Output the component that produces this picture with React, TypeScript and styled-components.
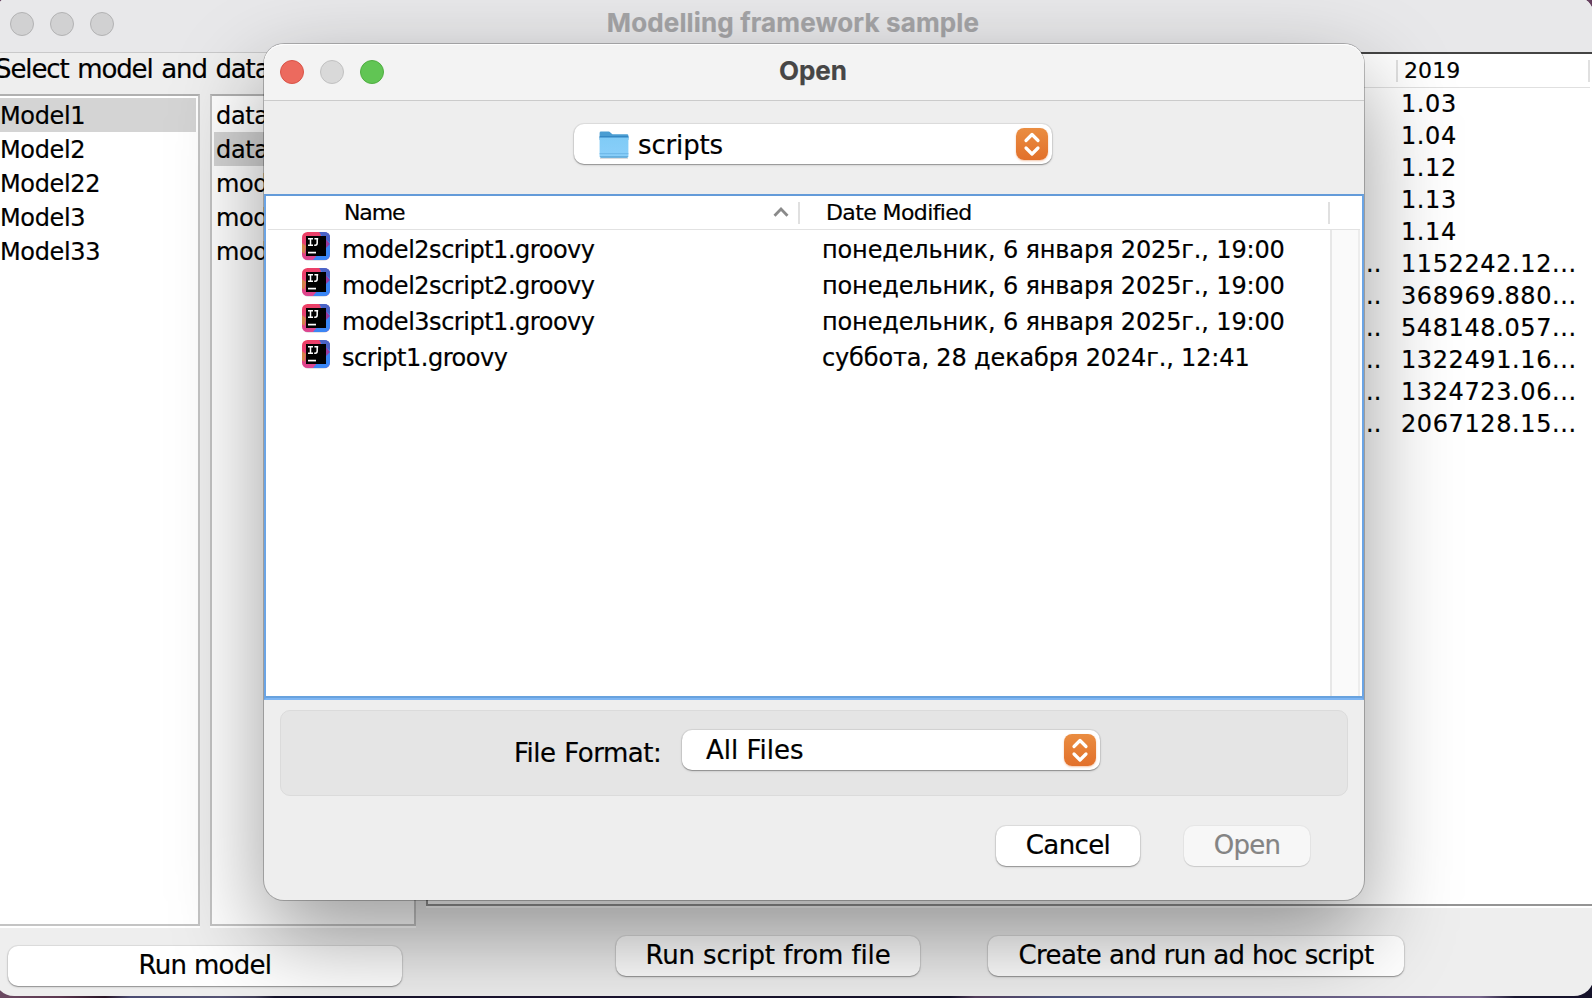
import React from 'react';
import styled, { createGlobalStyle, css } from 'styled-components';

const GlobalStyle = createGlobalStyle`
  html, body { margin: 0; padding: 0; }
  * { box-sizing: border-box; }
  body {
    width: 1592px;
    height: 998px;
    overflow: hidden;
    font-family: 'DejaVu Sans', 'Noto Sans', sans-serif;
    -webkit-text-stroke: 0.2px currentColor;
    color: #000;
  }
`;

const Desktop = styled.div`
  position: relative;
  width: 1592px;
  height: 998px;
  overflow: hidden;
  background:
    linear-gradient(90deg, #6b4a62 0, #5d3850 60px, #2a1526 105px, #4b4c72 130px, #565475 220px, #44405a 255px,
      #15122a 275px, #1b1430 560px, #15122a 950px, #55405e 975px, #4f5680 1060px, #5a5c84 1120px, #75648a 1480px,
      #1a1730 1515px, #15122a 1592px) bottom / 100% 14px no-repeat,
    #66405f;
`;

const Window = styled.section`
  display: flex;
  flex-direction: column;
  width: 1600px;
  height: 1000px;
  margin: -4px 0 0 -6px;
  border-radius: 20px;
  background: #eeeeee;
  overflow: hidden;
`;

const TitleBar = styled.header<{ $active?: boolean }>`
  display: grid;
  grid-template-columns: 200px 1fr 204px;
  align-items: center;
  flex: none;
  height: 56px;
  padding-left: 16px;
  background: ${p => (p.$active ? '#f3f3f3' : '#e8e8ea')};
  color: ${p => (p.$active ? '#464646' : '#a5a5a7')};
`;

const TitleText = styled.h1<{ $spacing: number }>`
  margin: 0;
  padding: 0 14px 2px 0;
  text-align: center;
  font: 700 26px/32px Inter, sans-serif;
  letter-spacing: ${p => p.$spacing}px;
  white-space: nowrap;
`;

const Lights = styled.div`
  display: flex;
  gap: 16px;
`;

const Light = styled.span<{ $fill: string; $edge: string }>`
  width: 24px;
  height: 24px;
  border-radius: 50%;
  background: ${p => p.$fill};
  border: 1px solid ${p => p.$edge};
`;

const Workspace = styled.div`
  display: flex;
  gap: 10px;
  flex: 1;
`;

const Sidebar = styled.aside`
  display: flex;
  flex-direction: column;
  width: 422px;
  border-top: 1px solid #c9c9ca;
`;

const SidebarLabel = styled.p`
  margin: 0;
  padding-left: 1px;
  height: 41px;
  font-size: 26px;
  line-height: 33px;
  letter-spacing: -1.1px;
  word-spacing: 1.4px;
  white-space: nowrap;
`;

const Lists = styled.div`
  display: flex;
  gap: 10px;
`;

const ListBox = styled.ul<{ $width: number; $inset: number }>`
  width: ${p => p.$width}px;
  height: 832px;
  margin: 0;
  padding: 2px 2px 0 ${p => p.$inset}px;
  list-style: none;
  background: #fff;
  border: 2px solid #c4c4c4;
  border-top-color: #b0b0b0;
  box-shadow: 0 2px 0 #fff;
`;

const ListItem = styled.li<{ $selected?: boolean }>`
  height: 34px;
  padding-left: 2px;
  font-size: 24px;
  line-height: 37px;
  letter-spacing: -0.35px;
  white-space: nowrap;
  background: ${p => (p.$selected ? '#d4d4d4' : 'transparent')};
`;

const SidebarFooter = styled.div`
  display: flex;
  padding: 20px 14px 0;
`;

const Content = styled.main`
  display: flex;
  flex-direction: column;
  flex: 1;
`;

const DataTable = styled.div`
  display: flex;
  flex-direction: column;
  height: 854px;
  background: #fff;
  border: 2px solid #949494;
  border-top-color: #444;
  border-right: 0;
  box-shadow: 0 2px 0 #fff;
`;

const DataHeader = styled.div`
  display: flex;
  justify-content: flex-end;
  flex: none;
  height: 34px;
  margin-right: 4px;
  padding-top: 6px;
  border-bottom: 1px solid #e0e0e0;
`;

const DataHeaderCell = styled.div`
  width: 194px;
  height: 22px;
  padding-left: 6px;
  border-left: 2px solid #e0e0e0;
  border-right: 2px solid #e0e0e0;
  font-size: 22px;
  line-height: 21px;
  letter-spacing: 0.1px;
`;

const DataRow = styled.div`
  display: grid;
  grid-template-columns: 35px 193px;
  justify-content: end;
  height: 32px;
  font-size: 24px;
  line-height: 32px;
  letter-spacing: 0.6px;
  white-space: nowrap;
`;

const Clipped = styled.span`
  padding-left: 0;
  letter-spacing: 0;
`;

const ScriptBar = styled.div`
  display: flex;
  justify-content: center;
  gap: 68px;
  padding-top: 30px;
`;

const raised = css`
  border-radius: 10px;
  background: #fff;
  box-shadow: 0 0 0 1px rgba(0, 0, 0, 0.06), 0 1px 1px rgba(0, 0, 0, 0.26), 0 1px 3px rgba(0, 0, 0, 0.14);
`;

const PushButton = styled.button<{ $width: number; $spacing?: number }>`
  ${raised}
  width: ${p => p.$width}px;
  height: 40px;
  margin: 0;
  padding: 0 0 2px;
  border: 0;
  font-family: inherit;
  font-size: 26px;
  line-height: 38px;
  letter-spacing: ${p => p.$spacing ?? 0}px;
  color: #000;
  white-space: nowrap;
  &:disabled {
    color: #848484;
    background: #f7f7f7;
    box-shadow: 0 0 0 1px rgba(0, 0, 0, 0.03), 0 1px 1px rgba(0, 0, 0, 0.12);
  }
`;

const Dialog = styled.section`
  position: absolute;
  left: 264px;
  top: 44px;
  display: flex;
  flex-direction: column;
  width: 1100px;
  height: 856px;
  border-radius: 20px;
  background: #eeeeee;
  box-shadow: 0 0 0 1px rgba(0, 0, 0, 0.24), 0 36px 92px rgba(0, 0, 0, 0.4);
`;

const DialogTitle = styled(TitleBar)`
  border-radius: 20px 20px 0 0;
  box-shadow: inset 0 1px 0 #fdfdfd;
`;

const PathBar = styled.div`
  display: flex;
  justify-content: center;
  flex: none;
  height: 94px;
  padding: 23px 2px 0 0;
  border-top: 1px solid #cbcbcb;
`;

const Popup = styled.div<{ $width: number; $pad: number; $spacing: number }>`
  ${raised}
  display: flex;
  align-items: center;
  width: ${p => p.$width}px;
  height: 40px;
  padding: 0 4px 0 ${p => p.$pad}px;
  font-size: 26px;
  letter-spacing: ${p => p.$spacing}px;
`;

const PopupText = styled.span<{ $line: number }>`
  flex: 1;
  height: 40px;
  line-height: ${p => p.$line}px;
`;

const Stepper = styled.span`
  display: grid;
  place-items: center;
  width: 32px;
  height: 32px;
  border-radius: 8px;
  background: linear-gradient(#ea8d41, #e2702a);
  box-shadow: 0 1px 2px rgba(226, 112, 42, 0.4);
`;

const FolderGlyph = styled.svg`
  width: 30px;
  height: 28px;
  margin: 1px 9px 0 0;
`;

const FilePane = styled.div`
  flex: none;
  height: 506px;
  background: #fff;
  border: 2px solid #6ba4e4;
  border-top-color: #639bd9;
  border-bottom: 2px solid #7db5f3;
  box-shadow: inset 0 -2px 0 #68a2de;
`;

const FileHeader = styled.div`
  display: grid;
  grid-template-columns: 532px 530px 28px;
  height: 34px;
  margin: 0 2px;
  padding-top: 6px;
  border-bottom: 1px solid #e2e2e2;
`;

const HeaderCell = styled.div<{ $pad: number; $spacing: number }>`
  display: flex;
  justify-content: space-between;
  height: 22px;
  padding: 0 9px 0 ${p => p.$pad}px;
  border-right: 2px solid #e0e0e0;
  font-size: 22px;
  line-height: 22px;
  letter-spacing: ${p => p.$spacing}px;
  white-space: nowrap;
`;

const SortCaret = styled.svg`
  width: 16px;
  height: 10px;
  margin-top: 5px;
`;

const FileBody = styled.div`
  display: grid;
  grid-template-columns: 1fr 30px;
  height: 466px;
  margin: 0 2px;
`;

const ScrollTrack = styled.div`
  background: #fafafa;
  border-left: 2px solid #e7e7e7;
  border-right: 2px solid #ededed;
`;

const FileRow = styled.div`
  display: grid;
  grid-template-columns: 40px 480px 1fr;
  height: 36px;
  padding: 1px 0 0 34px;
  font-size: 24px;
  line-height: 39px;
  white-space: nowrap;
`;

const AppGlyph = styled.svg`
  width: 28px;
  height: 30px;
`;

const FileName = styled.span`
  letter-spacing: -0.48px;
`;

const FileDate = styled.span`
  letter-spacing: -0.14px;
`;

const FormatPanel = styled.div`
  display: flex;
  flex: none;
  height: 86px;
  margin: 10px 16px 0;
  padding: 19px 0 0 233px;
  background: #e5e5e5;
  border: 1px solid #dbdbdb;
  border-radius: 10px;
`;

const FormatLabel = styled.label`
  width: 168px;
  padding-top: 5px;
  font-size: 26px;
  line-height: 36px;
  letter-spacing: -0.5px;
  word-spacing: 1px;
  white-space: nowrap;
`;

const DialogActions = styled.footer`
  display: flex;
  justify-content: flex-end;
  gap: 44px;
  padding: 30px 54px 0 0;
`;

const inactiveLights = Array.from({ length: 3 }, () => ({ fill: '#d1d1d2', edge: '#b3b3b4' }));
const activeLights = [
  { fill: '#ec6a5e', edge: '#d95347' },
  { fill: '#d9d9d9', edge: '#c1c1c1' },
  { fill: '#61c554', edge: '#4fae41' },
];

const models = ['Model1', 'Model2', 'Model22', 'Model3', 'Model33'];
const datasets = ['data1', 'data2', 'model2', 'model3', 'model4'];

const values = [
  '1.03', '1.04', '1.12', '1.13', '1.14',
  '1152242.12...', '368969.880...', '548148.057...',
  '1322491.16...', '1324723.06...', '2067128.15...',
];

const files = [
  { name: 'model2script1.groovy', date: 'понедельник, 6 января 2025г., 19:00' },
  { name: 'model2script2.groovy', date: 'понедельник, 6 января 2025г., 19:00' },
  { name: 'model3script1.groovy', date: 'понедельник, 6 января 2025г., 19:00' },
  { name: 'script1.groovy', date: 'суббота, 28 декабря 2024г., 12:41' },
];

const WindowLights = ({ lights }: { lights: { fill: string; edge: string }[] }) => (
  <Lights>
    {lights.map((l, i) => <Light key={i} $fill={l.fill} $edge={l.edge} />)}
  </Lights>
);

const StepperIcon = () => (
  <Stepper>
    <svg width="32" height="32" viewBox="0 0 32 32" fill="none" stroke="#fff" strokeWidth="3.200" strokeLinecap="round" strokeLinejoin="round">
      <path d="M10 12.500 16 6.500l6 6M10 20l6 6 6-6" />
    </svg>
  </Stepper>
);

const FolderIcon = () => (
  <FolderGlyph viewBox="0 0 30 28">
    <defs>
      <linearGradient id="folderFront" x1="0" y1="0" x2="0" y2="1">
        <stop offset="0" stopColor="#80cbf6" />
        <stop offset="1" stopColor="#8acffa" />
      </linearGradient>
    </defs>
    <path d="M1 26.600h28v1H1z" fill="#c0c4c8" />
    <path d="M.6 2Q.6.6 2 .6h7.600q1 0 1.800.8l1.400 1.300q.6.6 1.600.6H28q1.400 0 1.400 1.400V9H.6z" fill="#4a9dd2" />
    <path d="M.6 5.200h28.800v2H.6z" fill="#2f83c0" />
    <path d="M.6 6.400h28.800v18.800q0 1.400-1.400 1.400H2q-1.400 0-1.400-1.400z" fill="url(#folderFront)" />
    <path d="M.6 22.200h28.800v1H.6z" fill="#6bb6e6" />
    <path d="M.8 25.300q.3 1.400 1.400 1.400h25.600q1.100 0 1.400-1.400z" fill="#5aa6d6" />
  </FolderGlyph>
);

const IdeaIcon = () => (
  <AppGlyph viewBox="0 0 28 30">
    <defs>
      <clipPath id="ideaClip"><rect y="1" width="28" height="28" rx="5.500" /></clipPath>
      <linearGradient id="ideaPink" x1="0" y1="0" x2=".3" y2="1">
        <stop offset="0" stopColor="#ee3f60" />
        <stop offset="1" stopColor="#dc4593" />
      </linearGradient>
    </defs>
    <rect x=".5" y="2" width="27" height="27.600" rx="5.500" fill="#c9c9cf" />
    <g clipPath="url(#ideaClip)">
      <rect y="1" width="28" height="28" fill="url(#ideaPink)" />
      <path d="M0 12l4 3-1.500 8L0 21z" fill="#d3814a" />
      <path d="M18 1h10v28H11l5-6 6-6z" fill="#3a86f5" />
      <path d="M17 1h11v10l-5-3z" fill="#4b63c6" />
      <path d="M22 6l6 7-5 5z" fill="#9a3a9c" />
    </g>
    <rect x="4" y="5" width="20" height="20" fill="#000" />
    <path d="M6 7.800h5M8.500 7.800v6.400M6 14.200h5M12.400 7.800h3.800M15.200 7.800v4.200q0 2.200-2 2.200h-1" fill="none" stroke="#fff" strokeWidth="1.500" />
    <path d="M6 21.600h8" stroke="#fff" strokeWidth="1.700" />
  </AppGlyph>
);

export default function App() {
  return (
    <>
      <GlobalStyle />
      <Desktop>
        <Window>
          <TitleBar>
            <WindowLights lights={inactiveLights} />
            <TitleText $spacing={0.14}>Modelling framework sample</TitleText>
          </TitleBar>
          <Workspace>
            <Sidebar>
              <SidebarLabel>Select model and data</SidebarLabel>
              <Lists>
                <ListBox $width={206} $inset={2}>
                  {models.map((m, i) => <ListItem key={m} $selected={i === 0}>{m}</ListItem>)}
                </ListBox>
                <ListBox $width={206} $inset={2}>
                  {datasets.map((d, i) => <ListItem key={d} $selected={i === 1}>{d}</ListItem>)}
                </ListBox>
              </Lists>
              <SidebarFooter>
                <PushButton $width={394} $spacing={-0.7}>Run model</PushButton>
              </SidebarFooter>
            </Sidebar>
            <Content>
              <DataTable>
                <DataHeader><DataHeaderCell>2019</DataHeaderCell></DataHeader>
                {values.map(v => (
                  <DataRow key={v}>
                    <Clipped>{v.endsWith('...') ? '..' : ''}</Clipped>
                    <span>{v}</span>
                  </DataRow>
                ))}
              </DataTable>
              <ScriptBar>
                <PushButton $width={304} $spacing={-0.1}>Run script from file</PushButton>
                <PushButton $width={416} $spacing={-0.6}>Create and run ad hoc script</PushButton>
              </ScriptBar>
            </Content>
          </Workspace>
        </Window>

        <Dialog role="dialog">
          <DialogTitle as="header" $active>
            <WindowLights lights={activeLights} />
            <TitleText $spacing={0}>Open</TitleText>
          </DialogTitle>
          <PathBar>
            <Popup $width={478} $pad={25} $spacing={-0.15}>
              <FolderIcon />
              <PopupText $line={42}>scripts</PopupText>
              <StepperIcon />
            </Popup>
          </PathBar>
          <FilePane>
            <FileHeader>
              <HeaderCell $pad={76} $spacing={-1.1}>
                Name
                <SortCaret viewBox="0 0 16 10" fill="none" stroke="#8a8a8a" strokeWidth="2.800">
                  <path d="M1.500 8.700 8 2l6.500 6.700" />
                </SortCaret>
              </HeaderCell>
              <HeaderCell $pad={26} $spacing={-0.6}>Date Modified</HeaderCell>
            </FileHeader>
            <FileBody>
              <div>
                {files.map(f => (
                  <FileRow key={f.name}>
                    <IdeaIcon />
                    <FileName>{f.name}</FileName>
                    <FileDate>{f.date}</FileDate>
                  </FileRow>
                ))}
              </div>
              <ScrollTrack />
            </FileBody>
          </FilePane>
          <FormatPanel>
            <FormatLabel>File Format:</FormatLabel>
            <Popup $width={418} $pad={24} $spacing={0}>
              <PopupText $line={41}>All Files</PopupText>
              <StepperIcon />
            </Popup>
          </FormatPanel>
          <DialogActions>
            <PushButton $width={144} $spacing={-0.6}>Cancel</PushButton>
            <PushButton $width={126} $spacing={-0.7} disabled>Open</PushButton>
          </DialogActions>
        </Dialog>
      </Desktop>
    </>
  );
}
